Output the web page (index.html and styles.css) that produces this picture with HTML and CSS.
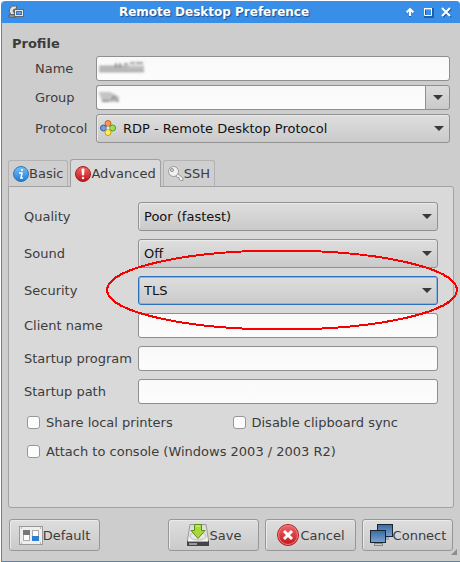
FILE: index.html
```html
<!DOCTYPE html>
<html lang="en">

<head>
    <meta charset="UTF-8">
    <meta name="viewport" content="width=device-width, initial-scale=1.0">
    <title>Remote Desktop Preference</title>
    <link rel="stylesheet" href="styles.css">
</head>

<body>
    <div class="window">
        <header class="titlebar">
            <svg class="app-icon" viewBox="0 0 16 14" width="16" height="14" aria-hidden="true">
                <path d="M2 3 Q4 0 9 1 L8 4 Q5 4 5 6 L7 9 L3 10 Q0 6 2 3z" fill="#dfe3df" stroke="#5b615e" stroke-width="1" />
                <path d="M1 10 L7 10 L8 12 L1 12z" fill="#c9cdca" stroke="#555" />
                <rect x="6.500" y="4.500" width="9" height="7" fill="#e8e8e0" stroke="#666" />
                <rect x="8" y="6" width="6" height="4" fill="#3c72b8" />
                <path d="M9 8h4" stroke="#a9c9ee" />
            </svg>
            <h1 class="title">Remote Desktop Preference</h1>
            <div class="window-controls">
                <button type="button" aria-label="Shade">
                    <svg viewBox="0 0 12 12" width="12" height="12"><path class="shade" d="M6 11V4M2 7L6 3L10 7" /><path d="M6 10V3M2.500 6.500L6 3L9.500 6.500" /></svg>
                </button>
                <button type="button" aria-label="Maximize">
                    <svg viewBox="0 0 12 12" width="12" height="12"><path class="shade" d="M3 3H11V11H3z" /><path class="thin" d="M2.500 3H9.500V9.500H2.500zM2 2.500H10" /></svg>
                </button>
                <button type="button" aria-label="Close">
                    <svg viewBox="0 0 12 12" width="12" height="12"><path class="shade" d="M3 3L11 11M11 3L3 11" /><path d="M2 2L10 10M10 2L2 10" /></svg>
                </button>
            </div>
        </header>

        <form class="content" onsubmit="return false;">
            <h2 class="section-title">Profile</h2>
            <div class="profile">
                <label for="name">Name</label>
                <div class="field">
                    <input type="text" id="name">
                    <svg class="smudge" viewBox="0 0 50 14" width="50" height="14" aria-hidden="true">
                        <path d="M1 8H46" stroke="#c0c0c0" stroke-width="7" />
                        <path d="M2 6H30M1 10H46" stroke="#999" />
                        <path d="M18 2v4M22 2v4M26 3h4M32 2h5M38 2h7" stroke="#444" />
                    </svg>
                </div>

                <label for="group">Group</label>
                <div class="field combo">
                    <input type="text" id="group">
                    <button type="button" class="combo-button" aria-label="Choose group"><span class="arrow"></span></button>
                    <svg class="smudge" viewBox="0 0 50 14" width="50" height="14" aria-hidden="true">
                        <path d="M2 3L12 3L20 7V11H5z" fill="#c4c4c4" stroke="#c4c4c4" stroke-width="2" />
                        <path d="M4 11H11M13 11L16 6L20 12" stroke="#666" fill="none" />
                    </svg>
                </div>

                <label for="protocol">Protocol</label>
                <div class="field select with-icon">
                    <select id="protocol">
                        <option>RDP - Remote Desktop Protocol</option>
                    </select>
                    <svg class="select-icon" viewBox="0 0 16 16" width="16" height="16" aria-hidden="true">
                        <circle cx="8" cy="3.500" r="3" fill="#f79a55" stroke="#c4601c" />
                        <circle cx="3.500" cy="8" r="3" fill="#7c9cd6" stroke="#3a5c99" />
                        <circle cx="12.500" cy="8" r="3" fill="#9be04f" stroke="#559a1a" />
                        <circle cx="8" cy="12.500" r="3" fill="#fcee66" stroke="#c0a010" />
                        <path d="M8 6L10 8L8 10L6 8z" fill="#e4e4e4" />
                    </svg>
                </div>
            </div>

            <div class="tabs" role="tablist">
                <button type="button" class="tab" role="tab" aria-selected="false">
                    <svg viewBox="0 0 16 16" width="16" height="16" aria-hidden="true">
                        <defs>
                            <linearGradient id="blue" x2="0" y2="1"><stop stop-color="#7ac0f5" /><stop offset="1" stop-color="#1b7cd6" /></linearGradient>
                        </defs>
                        <circle cx="8" cy="8" r="7.500" fill="url(#blue)" stroke="#2a76bd" />
                        <circle cx="9" cy="4" r="1" fill="#fff" />
                        <path d="M6 7H9L8 12H10" fill="none" stroke="#fff" stroke-width="1.500" />
                    </svg>Basic
                </button>
                <button type="button" class="tab active" role="tab" aria-selected="true">
                    <svg viewBox="0 0 16 16" width="16" height="16" aria-hidden="true">
                        <defs>
                            <linearGradient id="red" x2="0" y2="1"><stop stop-color="#f06a6a" /><stop offset="1" stop-color="#c31217" /></linearGradient>
                        </defs>
                        <circle cx="8" cy="8" r="7.500" fill="url(#red)" stroke="#a01c20" />
                        <path d="M7 3H9L8.600 9H7.400z" fill="#fff" stroke="#fff" />
                        <circle cx="8" cy="12" r="1.200" fill="#fff" />
                    </svg>Advanced
                </button>
                <button type="button" class="tab" role="tab" aria-selected="false">
                    <svg viewBox="0 0 16 16" width="16" height="16" aria-hidden="true">
                        <path d="M9 7L15 12V14.500H12.500L11 13V11.500H9.500L7 9.500z" fill="#f0f0f0" stroke="#999" />
                        <circle cx="5.500" cy="5.500" r="5" fill="#f0f0f0" stroke="#999" />
                        <circle cx="4" cy="4" r="1.600" fill="#ccc" stroke="#999" />
                    </svg>SSH
                </button>
            </div>

            <div class="panel" role="tabpanel">
                <div class="settings">
                    <label for="quality">Quality</label>
                    <div class="field select">
                        <select id="quality">
                            <option>Poor (fastest)</option>
                        </select>
                    </div>

                    <label for="sound">Sound</label>
                    <div class="field select">
                        <select id="sound">
                            <option>Off</option>
                        </select>
                    </div>

                    <label for="security">Security</label>
                    <div class="field select focused">
                        <select id="security">
                            <option>TLS</option>
                        </select>
                        <svg class="highlight" viewBox="0 0 352 82" preserveAspectRatio="none" aria-hidden="true">
                            <ellipse cx="176" cy="41" rx="175" ry="39.500" />
                        </svg>
                    </div>

                    <label for="client">Client name</label>
                    <div class="field"><input type="text" id="client"></div>

                    <label for="program">Startup program</label>
                    <div class="field"><input type="text" id="program"></div>

                    <label for="path">Startup path</label>
                    <div class="field"><input type="text" id="path"></div>
                </div>

                <div class="checks">
                    <label><input type="checkbox"> Share local printers</label>
                    <label><input type="checkbox"> Disable clipboard sync</label>
                    <label class="wide"><input type="checkbox"> Attach to console (Windows 2003 / 2003 R2)</label>
                </div>
            </div>

            <div class="actions">
                <button type="button" class="action default">
                    <svg viewBox="0 0 24 24" width="24" height="24" aria-hidden="true">
                        <rect x="0.500" y="3.500" width="23" height="18" fill="#eee" stroke="#999" />
                        <rect x="4.500" y="7.500" width="6" height="10" fill="#fff" stroke="#aaa" />
                        <rect x="13.500" y="7.500" width="6" height="10" fill="#fff" stroke="#aaa" />
                        <rect x="4" y="7" width="7" height="5" fill="#777" />
                        <rect x="13" y="13" width="7" height="5" fill="#2f7fd0" />
                        <path d="M2 5h1M21 5h1M2 20h1M21 20h1" stroke="#888" />
                    </svg>Default
                </button>
                <button type="button" class="action">
                    <svg viewBox="0 0 24 24" width="24" height="24" aria-hidden="true">
                        <defs>
                            <linearGradient id="drive" x2="0" y2="1"><stop stop-color="#d8d8d8" /><stop offset="1" stop-color="#fafafa" /></linearGradient>
                        </defs>
                        <path d="M4 1.500H20L22.500 17V22.500H1.500V17z" fill="url(#drive)" stroke="#999" />
                        <path d="M1 18H23V23H1z" fill="#444" />
                        <path d="M2 18.500H22" stroke="#aaa" />
                        <path d="M3 21H11" stroke="#999" stroke-width="2" />
                        <ellipse cx="12" cy="13" rx="8" ry="4" fill="#e8e8e8" stroke="#bbb" />
                        <path d="M8.500 1.500H15.500V7.500H19L12 15.500L5 7.500H8.500z" fill="#a9d83a" stroke="#5d8f12" />
                        <path d="M9.500 3H14" stroke="#d9f291" />
                    </svg>Save
                </button>
                <button type="button" class="action">
                    <svg viewBox="0 0 24 24" width="24" height="24" aria-hidden="true">
                        <circle cx="12" cy="12" r="10.500" fill="url(#red)" stroke="#b3191d" />
                        <circle cx="12" cy="12" r="9.500" fill="none" stroke="#ef8080" />
                        <path d="M8 8L16 16M16 8L8 16" stroke="#fff" stroke-width="3" />
                    </svg>Cancel
                </button>
                <button type="button" class="action">
                    <svg viewBox="0 0 24 24" width="24" height="24" aria-hidden="true">
                        <defs>
                            <linearGradient id="screen" x2="0" y2="1"><stop stop-color="#3b6ba5" /><stop offset="1" stop-color="#78a3d2" /></linearGradient>
                        </defs>
                        <path d="M14 14H20V17H14z" fill="#aaa" />
                        <rect x="8.500" y="1.500" width="15" height="12" fill="url(#screen)" stroke="#1d252c" />
                        <path d="M7 19H12V21H7z" fill="#888" />
                        <rect x="5.500" y="20.500" width="8" height="2" fill="#ccc" stroke="#888" />
                        <rect x="1.500" y="7.500" width="15" height="12" fill="url(#screen)" stroke="#1d252c" />
                    </svg>Connect
                </button>
            </div>
        </form>
        <span class="grip"></span>
    </div>
</body>

</html>
```

FILE: styles.css
```css
* {
    box-sizing: border-box;
}

body {
    margin: 0;
    min-height: 100vh;
    display: flex;
    padding: 1px 0 0 1px;
    background: #fff;
    font-family: "DejaVu Sans", sans-serif;
    font-size: 13px;
    color: #3c3c3c;
}

.window {
    position: relative;
    flex: 1;
    display: flex;
    flex-direction: column;
    background: #cdcdcd;
    border: 1px solid #4a86cc;
    border-top: 0;
    border-right: 0;
    border-radius: 4px 4px 0 0;
}

.titlebar {
    height: 22px;
    padding: 0 8px 0 6px;
    display: flex;
    align-items: center;
    background: #398ee7;
    border-radius: 4px 4px 0 0;
}

.title {
    flex: 1;
    margin: 0;
    text-align: center;
    font-size: 12px;
    line-height: 22px;
    color: #fff;
    text-shadow: 1px 1px 1px #1c4f8c;
}

.window-controls {
    display: flex;
    gap: 6px;
}

.window-controls button {
    display: block;
    padding: 0;
    border: 0;
    background: none;
}

.window-controls svg {
    display: block;
    fill: none;
    stroke: #fff;
    stroke-width: 2;
}

.window-controls .shade {
    stroke: #1f5fa8;
}

.window-controls .thin {
    stroke-width: 1;
}

.content {
    flex: 1;
    display: flex;
    flex-direction: column;
    padding: 12px 6px 10px;
}

.section-title {
    margin: 0 4px 4px;
    font-size: 13px;
    line-height: 17px;
}

.profile {
    display: grid;
    grid-template-columns: 61px 1fr;
    align-items: center;
    gap: 4px 0;
    margin: 0 4px 0 27px;
}

.field {
    position: relative;
    display: flex;
    min-width: 0;
}

input[type="text"] {
    flex: 1;
    min-width: 0;
    height: 25px;
    padding: 0 5px;
    border: 1px solid #8f8f8f;
    border-radius: 3px;
    background: linear-gradient(#f9f9f9, #fcfcfc);
    font: inherit;
    color: #111;
}

.combo input[type="text"] {
    border-radius: 3px 0 0 3px;
    border-right: 0;
}

.combo-button {
    width: 25px;
    height: 25px;
    padding: 0;
    display: flex;
    align-items: center;
    justify-content: center;
    border: 1px solid #8f8f8f;
    border-radius: 0 3px 3px 0;
    background: linear-gradient(#dcdcdc, #cacaca);
}

.arrow,
.select::after {
    content: "";
    border: 5px solid transparent;
    border-top-color: #3a3a3a;
    border-bottom: 0;
}

.select::after {
    position: absolute;
    right: 6px;
    top: 12px;
    pointer-events: none;
}

.select select {
    flex: 1;
    min-width: 0;
    height: 29px;
    padding: 0 24px 0 5px;
    appearance: none;
    border: 1px solid #919191;
    border-radius: 3px;
    background: linear-gradient(#dedede, #cacaca);
    box-shadow: inset 1px 1px 0 #eaeaea;
    font: inherit;
    color: #111;
}

.with-icon select {
    padding-left: 26px;
}

.select-icon {
    position: absolute;
    left: 4px;
    top: 6px;
    pointer-events: none;
}

.focused select {
    border-color: #2b6fbe;
    box-shadow: inset 0 0 0 1px #8fb4dd;
}

.smudge {
    position: absolute;
    left: 2px;
    top: 5px;
    filter: blur(1px);
    pointer-events: none;
}

.highlight {
    position: absolute;
    z-index: 1;
    left: -32px;
    top: -27px;
    width: calc(100% + 52px);
    height: 82px;
    pointer-events: none;
}

.highlight ellipse {
    fill: none;
    stroke: #f80000;
    stroke-width: 2;
    shape-rendering: crispEdges;
}

.tabs {
    display: flex;
    align-items: flex-end;
    gap: 2px;
    margin-top: 16px;
    position: relative;
}

.tab {
    height: 26px;
    padding: 0 4px;
    display: flex;
    align-items: center;
    border: 1px solid #b3b3b3;
    border-bottom: 0;
    border-radius: 3px 3px 0 0;
    background: #cfcfcf;
    font: inherit;
    color: #3c3c3c;
}

.tab.active {
    height: 28px;
    margin-bottom: -1px;
    border-color: #a0a0a0;
    background: #d9d9d9;
}

.panel {
    flex: 1;
    padding: 15px 15px 0;
    border: 1px solid #a3a3a3;
    border-radius: 0 3px 3px 3px;
    background: #d9d9d9;
}

.settings {
    display: grid;
    grid-template-columns: 114px 1fr;
    align-items: center;
    gap: 8px 0;
}

.checks {
    display: grid;
    grid-template-columns: 1fr 1fr;
    gap: 12px 0;
    margin-top: 10px;
    padding-left: 3px;
}

.checks label {
    display: flex;
    align-items: center;
    gap: 6px;
    line-height: 17px;
}

.checks .wide {
    grid-column: 1 / 3;
}

.checks input {
    appearance: none;
    width: 13px;
    height: 13px;
    margin: 0;
    border: 1px solid #979797;
    border-radius: 3px;
    background: #fcfcfc;
}

.actions {
    display: flex;
    gap: 6px;
    margin: 11px 1px 0;
}

.action {
    width: 91px;
    height: 32px;
    padding: 0;
    display: flex;
    align-items: center;
    justify-content: center;
    border: 1px solid #979797;
    border-radius: 3px;
    background: linear-gradient(#dedede, #cacaca);
    box-shadow: inset 1px 1px 0 #eaeaea;
    font: inherit;
    color: #3c3c3c;
}

.default {
    margin-right: auto;
}

.grip {
    position: absolute;
    right: 3px;
    bottom: 6px;
    border: 3px solid #8c8c8c;
    border-top-color: transparent;
    border-left-color: transparent;
}
```
